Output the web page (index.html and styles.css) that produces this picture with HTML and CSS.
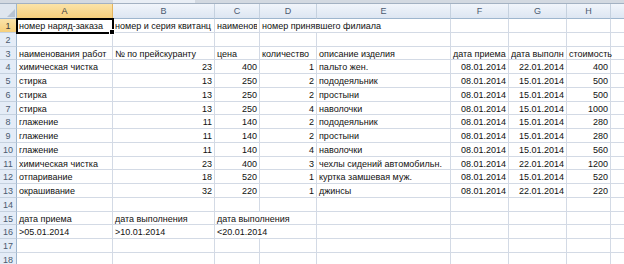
FILE: index.html
```html
<!DOCTYPE html>
<html lang="ru">
<head>
<meta charset="utf-8">
<link rel="stylesheet" href="styles.css">
</head>
<body>
<div class="strip"><div class="strip-seg"></div></div>
<div class="sheet">
  <div class="corner"><svg width="9" height="9" viewBox="0 0 9 9"><polygon points="9,1 9,9 1,9" fill="#b7c3d3"/></svg></div>
  <div class="ch sel">A</div><div class="ch">B</div><div class="ch">C</div><div class="ch">D</div><div class="ch">E</div><div class="ch">F</div><div class="ch">G</div><div class="ch">H</div><div class="ch"></div>

  <div class="rh sel">1</div>
  <div class="c active">номер наряд-заказа<span class="handle"></span></div><div class="c clip"><span class="cut">номер и серия квитанц</span></div><div class="c clip"><span class="cut">наименов</span></div><div class="c span2">номер принявшего филиала</div><div class="c"></div><div class="c"></div><div class="c"></div><div class="c"></div>

  <div class="rh">2</div>
  <div class="c"></div><div class="c"></div><div class="c"></div><div class="c"></div><div class="c"></div><div class="c"></div><div class="c"></div><div class="c"></div><div class="c"></div>

  <div class="rh">3</div>
  <div class="c">наименования работ</div><div class="c">№ по прейскуранту</div><div class="c">цена</div><div class="c">количество</div><div class="c">описание изделия</div><div class="c">дата приема</div><div class="c clip"><span class="cut">дата выполн</span></div><div class="c">стоимость</div><div class="c"></div>

  <div class="rh">4</div>
  <div class="c">химическая чистка</div><div class="c r">23</div><div class="c r">400</div><div class="c r">1</div><div class="c">пальто жен.</div><div class="c r">08.01.2014</div><div class="c r">22.01.2014</div><div class="c r">400</div><div class="c"></div>

  <div class="rh">5</div>
  <div class="c">стирка</div><div class="c r">13</div><div class="c r">250</div><div class="c r">2</div><div class="c">пододеяльник</div><div class="c r">08.01.2014</div><div class="c r">15.01.2014</div><div class="c r">500</div><div class="c"></div>

  <div class="rh">6</div>
  <div class="c">стирка</div><div class="c r">13</div><div class="c r">250</div><div class="c r">2</div><div class="c">простыни</div><div class="c r">08.01.2014</div><div class="c r">15.01.2014</div><div class="c r">500</div><div class="c"></div>

  <div class="rh">7</div>
  <div class="c">стирка</div><div class="c r">13</div><div class="c r">250</div><div class="c r">4</div><div class="c">наволочки</div><div class="c r">08.01.2014</div><div class="c r">15.01.2014</div><div class="c r">1000</div><div class="c"></div>

  <div class="rh">8</div>
  <div class="c">глажение</div><div class="c r">11</div><div class="c r">140</div><div class="c r">2</div><div class="c">пододеяльник</div><div class="c r">08.01.2014</div><div class="c r">15.01.2014</div><div class="c r">280</div><div class="c"></div>

  <div class="rh">9</div>
  <div class="c">глажение</div><div class="c r">11</div><div class="c r">140</div><div class="c r">2</div><div class="c">простыни</div><div class="c r">08.01.2014</div><div class="c r">15.01.2014</div><div class="c r">280</div><div class="c"></div>

  <div class="rh">10</div>
  <div class="c">глажение</div><div class="c r">11</div><div class="c r">140</div><div class="c r">4</div><div class="c">наволочки</div><div class="c r">08.01.2014</div><div class="c r">15.01.2014</div><div class="c r">560</div><div class="c"></div>

  <div class="rh">11</div>
  <div class="c">химическая чистка</div><div class="c r">23</div><div class="c r">400</div><div class="c r">3</div><div class="c">чехлы сидений автомобильн.</div><div class="c r">08.01.2014</div><div class="c r">22.01.2014</div><div class="c r">1200</div><div class="c"></div>

  <div class="rh">12</div>
  <div class="c">отпаривание</div><div class="c r">18</div><div class="c r">520</div><div class="c r">1</div><div class="c">куртка замшевая муж.</div><div class="c r">08.01.2014</div><div class="c r">15.01.2014</div><div class="c r">520</div><div class="c"></div>

  <div class="rh">13</div>
  <div class="c">окрашивание</div><div class="c r">32</div><div class="c r">220</div><div class="c r">1</div><div class="c">джинсы</div><div class="c r">08.01.2014</div><div class="c r">22.01.2014</div><div class="c r">220</div><div class="c"></div>

  <div class="rh">14</div>
  <div class="c"></div><div class="c"></div><div class="c"></div><div class="c"></div><div class="c"></div><div class="c"></div><div class="c"></div><div class="c"></div><div class="c"></div>

  <div class="rh">15</div>
  <div class="c">дата приема</div><div class="c">дата выполнения</div><div class="c span2">дата выполнения</div><div class="c"></div><div class="c"></div><div class="c"></div><div class="c"></div><div class="c"></div>

  <div class="rh">16</div>
  <div class="c">&gt;05.01.2014</div><div class="c">&gt;10.01.2014</div><div class="c span2">&lt;20.01.2014</div><div class="c"></div><div class="c"></div><div class="c"></div><div class="c"></div><div class="c"></div>

  <div class="rh">17</div>
  <div class="c"></div><div class="c"></div><div class="c"></div><div class="c"></div><div class="c"></div><div class="c"></div><div class="c"></div><div class="c"></div><div class="c"></div>

  <div class="rh">18</div>
  <div class="c"></div><div class="c"></div><div class="c"></div><div class="c"></div><div class="c"></div><div class="c"></div><div class="c"></div><div class="c"></div><div class="c"></div>
</div>
</body>
</html>
```
FILE: styles.css
```css
html, body {
  margin: 0;
  padding: 0;
  background: #ffffff;
  overflow: hidden;
}
body {
  width: 624px;
  height: 264px;
  font-family: "Liberation Sans", Arial, sans-serif;
}
.strip {
  height: 4px;
  background: #d3d9e1;
  border-bottom: 1px solid #a3b1c2;
  box-sizing: border-box;
  display: flex;
}
.strip-seg {
  margin-left: 113px;
  width: 82px;
  background: #e9eef5;
}
.sheet {
  display: grid;
  grid-template-columns: 17px 96px 102px 45px 57px 134px 58px 58px 44px 30px;
  grid-template-rows: 15px;
  grid-auto-rows: 13.75px;
}
.corner {
  background: #dfe6ef;
  border-right: 1px solid #9eb6ce;
  border-bottom: 1px solid #9eb6ce;
  box-sizing: border-box;
  display: flex;
  align-items: flex-end;
  justify-content: flex-end;
  padding: 0 1px 1px 0;
}
.corner svg { display: block; }
.ch {
  background: linear-gradient(#f1f5fb, #dde6f2);
  border-right: 1px solid #c5d1df;
  border-bottom: 1px solid #9eb6ce;
  box-sizing: border-box;
  font-size: 9px;
  color: #4a5a70;
  text-align: center;
  line-height: 15px;
}
.ch.sel {
  background: linear-gradient(#fbe3a8, #f6cf7c);
  border-bottom: 1px solid #f0a83a;
  border-right-color: #e5b55f;
  color: #3e3e3e;
}
.rh {
  background: #e4ecf7;
  border-right: 1px solid #9eb6ce;
  border-bottom: 1px solid #c5d1df;
  box-sizing: border-box;
  font-size: 9px;
  color: #4a5a70;
  text-align: center;
  line-height: 15px;
}
.rh.sel {
  background: linear-gradient(#fbe3a8, #f6cf7c);
  border-right: 1px solid #f0a83a;
  color: #3e3e3e;
}
.c {
  border-right: 1px solid #d3dae5;
  border-bottom: 1px solid #d3dae5;
  box-sizing: border-box;
  font-size: 9px;
  color: #111111;
  line-height: 15px;
  padding: 0 2px;
  white-space: nowrap;
  overflow: visible;
  position: relative;
}
.c.clip { overflow: hidden; }
.cut { display: block; overflow: hidden; }
.c.r { text-align: right; }
.span2 { grid-column: span 2; }
.active {
  outline: 2px solid #000000;
  outline-offset: -1px;
  z-index: 2;
}
.handle {
  position: absolute;
  right: -3px;
  bottom: -3px;
  width: 4px;
  height: 4px;
  background: #000000;
  border: 1px solid #ffffff;
}
```
